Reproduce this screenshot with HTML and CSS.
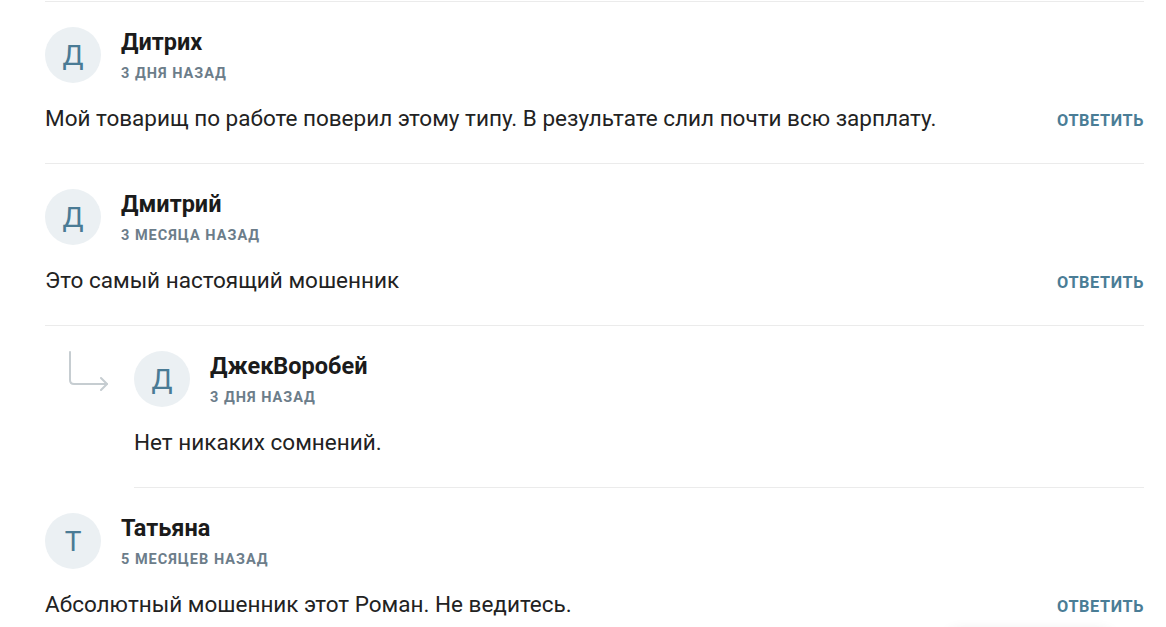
FILE: index.html
```html
<!DOCTYPE html>
<html lang="ru">
<head>
<meta charset="utf-8">
<link rel="stylesheet" href="styles.css">
</head>
<body>
<div class="comments">
  <div class="comment">
    <div class="head">
      <div class="avatar">Д</div>
      <div class="meta">
        <div class="name">Дитрих</div>
        <div class="date">3 дня назад</div>
      </div>
    </div>
    <div class="body">
      <p class="text">Мой товарищ по работе поверил этому типу. В результате слил почти всю зарплату.</p>
      <a class="reply">Ответить</a>
    </div>
  </div>
  <div class="comment">
    <div class="head">
      <div class="avatar">Д</div>
      <div class="meta">
        <div class="name">Дмитрий</div>
        <div class="date">3 месяца назад</div>
      </div>
    </div>
    <div class="body">
      <p class="text">Это самый настоящий мошенник</p>
      <a class="reply">Ответить</a>
    </div>
  </div>
  <div class="comment nested">
    <svg class="arrow" width="44" height="40" viewBox="0 0 44 40" fill="none" stroke="#c6cdd1" stroke-width="2" stroke-linecap="round" stroke-linejoin="round">
      <path d="M3 1 V29 Q3 33 7 33 H40"/>
      <path d="M34 27 L40 33 L34 39"/>
    </svg>
    <div class="head">
      <div class="avatar">Д</div>
      <div class="meta">
        <div class="name">ДжекВоробей</div>
        <div class="date">3 дня назад</div>
      </div>
    </div>
    <div class="body">
      <p class="text">Нет никаких сомнений.</p>
    </div>
  </div>
  <div class="comment">
    <div class="head">
      <div class="avatar">Т</div>
      <div class="meta">
        <div class="name">Татьяна</div>
        <div class="date">5 месяцев назад</div>
      </div>
    </div>
    <div class="body">
      <p class="text">Абсолютный мошенник этот Роман. Не ведитесь.</p>
      <a class="reply">Ответить</a>
    </div>
  </div>
</div>
<div class="floating"></div>
</body>
</html>
```
FILE: styles.css
```css
html, body {
  margin: 0;
  padding: 0;
  background: #fff;
  overflow: hidden;
}
body {
  font-family: Roboto, "Noto Sans", sans-serif;
  color: #222;
  height: 627px;
}
.comments {
  padding: 1px 22px 0 45px;
}
.comment {
  position: relative;
  border-bottom: 1px solid #ebebeb;
  height: 162px;
  padding-top: 25px;
  box-sizing: border-box;
}
.comment:first-child {
  border-top: 1px solid #ebebeb;
  height: 163px;
}
.head {
  display: flex;
  align-items: flex-start;
  gap: 20px;
}
.avatar {
  width: 56px;
  height: 56px;
  border-radius: 50%;
  background: #ebf0f3;
  color: #4a7b95;
  font-size: 28px;
  display: flex;
  align-items: center;
  justify-content: center;
  flex-shrink: 0;
}
.meta {
  padding-top: 1px;
}
.name {
  font-size: 23.5px;
  font-weight: 700;
  color: #1b1b1b;
  line-height: 28px;
}
.date {
  margin-top: 9px;
  font-size: 14.5px;
  font-weight: 700;
  color: #6c7d8a;
  text-transform: uppercase;
  letter-spacing: 1px;
  line-height: 17px;
}
.body {
  display: flex;
  align-items: center;
  justify-content: space-between;
  margin-top: 20px;
}
.text {
  margin: 0;
  font-size: 22.5px;
  line-height: 30px;
  color: #222;
}
.reply {
  font-size: 16.3px;
  font-weight: 700;
  color: #4a7d96;
  text-transform: uppercase;
  letter-spacing: 0.6px;
  cursor: pointer;
  margin-top: 5px;
}
.nested {
  margin-left: 89px;
}
.arrow {
  position: absolute;
  left: -67px;
  top: 25px;
}
.floating {
  position: fixed;
  left: 950px;
  top: 632px;
  width: 160px;
  height: 40px;
  background: #fff;
  box-shadow: 0 0 14px rgba(0,0,0,0.12);
  border-radius: 6px;
}
```
